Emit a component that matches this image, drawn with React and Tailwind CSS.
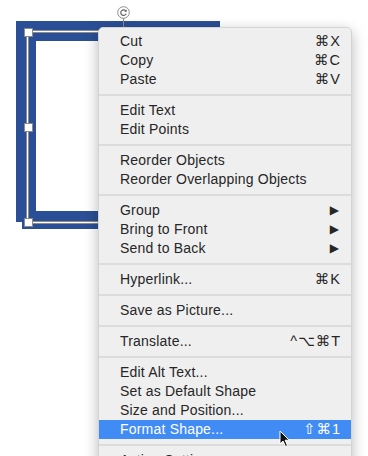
import { Fragment } from 'react';

const groups = [
  [
    { label: 'Cut', key: '⌘X' },
    { label: 'Copy', key: '⌘C' },
    { label: 'Paste', key: '⌘V' },
  ],
  [{ label: 'Edit Text' }, { label: 'Edit Points' }],
  [{ label: 'Reorder Objects' }, { label: 'Reorder Overlapping Objects' }],
  [
    { label: 'Group', sub: true },
    { label: 'Bring to Front', sub: true },
    { label: 'Send to Back', sub: true },
  ],
  [{ label: 'Hyperlink...', key: '⌘K' }],
  [{ label: 'Save as Picture...' }],
  [{ label: 'Translate...', key: '^⌥⌘T' }],
  [
    { label: 'Edit Alt Text...' },
    { label: 'Set as Default Shape' },
    { label: 'Size and Position...' },
    { label: 'Format Shape...', key: '⇧⌘1', active: true },
  ],
  [{ label: 'Action Settings...' }],
];

function MenuRow({ item }) {
  return (
    <div
      className={
        'flex items-center justify-between h-[19px] pl-[21px] pr-[10px] ' +
        (item.active ? 'bg-[#418cf4] text-white' : 'text-[#262626]')
      }
    >
      <span className="tracking-[0.2px]">{item.label}</span>
      {item.key && <span className="tracking-[1px] text-[14.5px]">{item.key}</span>}
      {item.sub && <span className="text-[12px] pr-[2px]">▶</span>}
    </div>
  );
}

function Handle({ className }) {
  return <div className={'absolute w-[9px] h-[9px] bg-white border border-[#8a8a8a] ' + className} />;
}

export default function App() {
  return (
    <div
      className="relative w-[368px] h-[456px] overflow-hidden bg-white"
      style={{ fontFamily: '"Liberation Sans", "DejaVu Sans", sans-serif' }}
    >
      {/* shape */}
      <div className="absolute left-[16px] top-[21px] w-[204px] h-[201px] bg-[#2b4f96] shadow-[6px_7px_0_#2b4f96]">
        <div className="absolute left-[20px] top-[20px] right-[20px] bottom-[11px] bg-white" />
      </div>

      {/* selection box */}
      <div className="absolute left-[27px] top-[31px] w-[200px] h-[192px] border border-white shadow-[0_0_0_1px_#8c8c8c,inset_0_0_0_1px_#8c8c8c]" />
      <Handle className="left-[24px] top-[28px]" />
      <Handle className="left-[24px] top-[123px]" />
      <Handle className="left-[24px] top-[218px]" />

      {/* rotate handle */}
      <div className="absolute left-[123px] top-[17px] w-px h-[11px] bg-[#8c8c8c]" />
      <svg className="absolute left-[117px] top-[6px]" width="13" height="13" viewBox="0 0 13 13">
        <circle cx="6.5" cy="6.5" r="5.8" fill="white" stroke="#8c8c8c" strokeWidth="1" />
        <path d="M9 5.2 A2.8 2.8 0 1 0 9.2 7.6" fill="none" stroke="#666" strokeWidth="1.2" />
        <path d="M9.8 3.4 L9.6 6 L7.2 5.4 Z" fill="#666" />
      </svg>

      {/* context menu */}
      <div className="absolute left-[98px] top-[27px] w-[254px] pt-[4px] bg-[#efefef] rounded-[5px] border border-[#d4d4d4] shadow-[0_4px_14px_rgba(0,0,0,0.28)] text-[14px] leading-[19px]">
        {groups.map((group, gi) => (
          <Fragment key={gi}>
            {gi > 0 && <div className="my-[5px] h-[2px] bg-[#dcdcdc]" />}
            {group.map((item) => (
              <MenuRow key={item.label} item={item} />
            ))}
          </Fragment>
        ))}
      </div>

      {/* cursor */}
      <svg className="absolute left-[279px] top-[430px]" width="12" height="18" viewBox="0 0 12 18">
        <path d="M1 1 L1 14 L4 11 L6.5 16.5 L8.5 15.6 L6.1 10.2 L10.2 10.2 Z" fill="#111" stroke="white" strokeWidth="1" strokeLinejoin="round" />
      </svg>
    </div>
  );
}
